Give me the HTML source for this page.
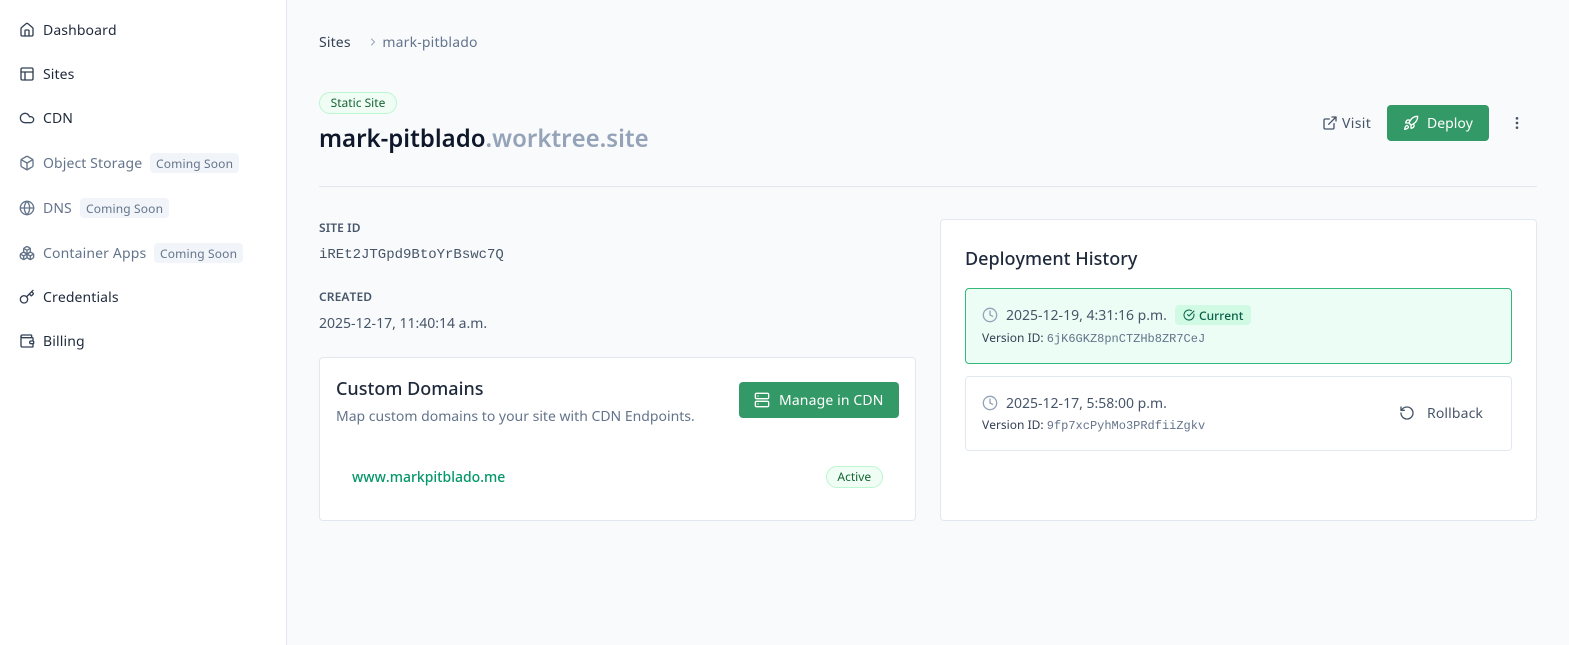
<!DOCTYPE html>
<html lang="en"><head><meta charset="utf-8"><title>mark-pitblado</title>
<style>
*{box-sizing:border-box;margin:0;padding:0}
html,body{width:1569px;height:645px;overflow:hidden;background:#f8fafc}
body{position:relative;font-family:"Noto Sans","Noto Sans CJK JP","Liberation Sans",sans-serif;font-size:14px;color:#334155;font-kerning:none}
.a{position:absolute;white-space:nowrap}
.side{position:absolute;left:0;top:0;width:287px;height:645px;background:#fff;border-right:1px solid #e2e8f0}
.nav{position:absolute;left:43px;font-size:14px;line-height:20px;color:#1e293b;white-space:nowrap;letter-spacing:.1px}
.nav.dim{color:#64748b}
.ic{position:absolute;fill:none;stroke:currentColor;stroke-width:2;stroke-linecap:round;stroke-linejoin:round}
.soon{position:absolute;height:20px;line-height:22px;background:#f1f5f9;color:#64748b;font-size:12px;border-radius:4px;padding:0 6px;white-space:nowrap;letter-spacing:.14px}
.mono{font-family:"Liberation Mono",monospace;letter-spacing:0}
.card{position:absolute;background:#fff;border:1px solid #e2e8f0;border-radius:4px}
.btn{position:absolute;background:#339966;color:#fff;border-radius:4px}
.pill{position:absolute;background:#f0fdf4;border:1px solid #bbf7d0;color:#166534;border-radius:999px;font-size:12px;text-align:center}
</style></head><body>
<div class="side"></div>

<svg class="ic" style="left:19px;top:22px;color:#334155" width="16" height="16" viewBox="0 0 24 24"><path d="M15 21v-8a1 1 0 0 0-1-1h-4a1 1 0 0 0-1 1v8"/><path d="M3 10a2 2 0 0 1 .709-1.528l7-6a2 2 0 0 1 2.582 0l7 6A2 2 0 0 1 21 10v9a2 2 0 0 1-2 2H5a2 2 0 0 1-2-2z"/></svg>
<div class="nav" style="top:21px">Dashboard</div>
<svg class="ic" style="left:19px;top:66px;color:#334155" width="16" height="16" viewBox="0 0 24 24"><rect x="3" y="3" width="18" height="18" rx="2"/><path d="M3 9h18"/><path d="M9 21V9"/></svg>
<div class="nav" style="top:65px">Sites</div>
<svg class="ic" style="left:19px;top:110px;color:#334155" width="16" height="16" viewBox="0 0 24 24"><path d="M17.5 19H9a7 7 0 1 1 6.71-9h1.79a4.5 4.5 0 1 1 0 9Z"/></svg>
<div class="nav" style="top:109px">CDN</div>
<svg class="ic" style="left:19px;top:155px;color:#64748b" width="16" height="16" viewBox="0 0 24 24"><path d="M21 8a2 2 0 0 0-1-1.73l-7-4a2 2 0 0 0-2 0l-7 4A2 2 0 0 0 3 8v8a2 2 0 0 0 1 1.73l7 4a2 2 0 0 0 2 0l7-4A2 2 0 0 0 21 16Z"/><path d="m3.3 7 8.7 5 8.7-5"/><path d="M12 22V12"/></svg>
<div class="nav dim" style="top:154px">Object Storage</div>
<div class="soon" style="left:150px;top:153px">Coming Soon</div>
<svg class="ic" style="left:19px;top:200px;color:#64748b" width="16" height="16" viewBox="0 0 24 24"><circle cx="12" cy="12" r="10"/><path d="M12 2a14.5 14.5 0 0 0 0 20 14.5 14.5 0 0 0 0-20"/><path d="M2 12h20"/></svg>
<div class="nav dim" style="top:199px">DNS</div>
<div class="soon" style="left:80px;top:198px">Coming Soon</div>
<svg class="ic" style="left:19px;top:245px;color:#64748b" width="16" height="16" viewBox="0 0 24 24"><path d="M2.97 12.92A2 2 0 0 0 2 14.63v3.24a2 2 0 0 0 .97 1.71l3 1.8a2 2 0 0 0 2.06 0L12 19v-5.5l-5-3-4.03 2.42Z"/><path d="m7 16.5-4.74-2.85"/><path d="m7 16.5 5-3"/><path d="M7 16.5v5.17"/><path d="M12 13.5V19l3.97 2.38a2 2 0 0 0 2.06 0l3-1.8a2 2 0 0 0 .97-1.71v-3.24a2 2 0 0 0-.97-1.71L17 10.5l-5 3Z"/><path d="m17 16.5-5-3"/><path d="m17 16.5 4.74-2.85"/><path d="M17 16.5v5.17"/><path d="M7.97 4.42A2 2 0 0 0 7 6.13v4.37l5 3 5-3V6.13a2 2 0 0 0-.97-1.71l-3-1.8a2 2 0 0 0-2.06 0l-3 1.8Z"/><path d="M12 8 7.26 5.15"/><path d="m12 8 4.74-2.85"/><path d="M12 13.5V8"/></svg>
<div class="nav dim" style="top:244px;letter-spacing:.14px">Container Apps</div>
<div class="soon" style="left:154px;top:243px">Coming Soon</div>
<svg class="ic" style="left:19px;top:289px;color:#334155" width="16" height="16" viewBox="0 0 24 24"><path d="m15.5 7.5 2.3 2.3a1 1 0 0 0 1.4 0l2.1-2.1a1 1 0 0 0 0-1.4L19 4"/><path d="m21 2-9.6 9.6"/><circle cx="7.5" cy="15.5" r="5.5"/></svg>
<div class="nav" style="top:288px">Credentials</div>
<svg class="ic" style="left:19px;top:333px;color:#334155" width="16" height="16" viewBox="0 0 24 24"><path d="M19 7V4a1 1 0 0 0-1-1H5a2 2 0 0 0 0 4h15a1 1 0 0 1 1 1v4h-3a2 2 0 0 0 0 4h3a1 1 0 0 0 1-1v-2a1 1 0 0 0-1-1"/><path d="M3 5v14a2 2 0 0 0 2 2h15a1 1 0 0 0 1-1v-4"/></svg>
<div class="nav" style="top:332px;letter-spacing:.14px">Billing</div>

<div class="a" style="left:319px;top:33px;line-height:20px;color:#334155;letter-spacing:.15px">Sites</div>
<svg class="ic" style="left:367px;top:36px;color:#94a3b8" width="12" height="12" viewBox="0 0 24 24"><path d="m9 18 6-6-6-6"/></svg>
<div class="a" style="left:382.4px;top:33px;line-height:20px;color:#64748b;letter-spacing:.16px">mark-pitblado</div>

<div class="pill" style="left:319px;top:92px;width:78px;height:22px;line-height:20px">Static Site</div>
<div class="a" style="left:319px;top:123px;font-size:24px;line-height:32px;font-weight:600;color:#0f172a">mark-pitblado<span style="color:#94a3b8">.worktree.site</span></div>

<svg class="ic" style="left:1322px;top:115px;color:#475569" width="16" height="16" viewBox="0 0 24 24"><path d="M15 3h6v6"/><path d="M10 14 21 3"/><path d="M18 13v6a2 2 0 0 1-2 2H5a2 2 0 0 1-2-2V8a2 2 0 0 1 2-2h6"/></svg>
<div class="a" style="left:1342px;top:114px;line-height:20px;color:#475569;letter-spacing:.35px">Visit</div>
<div class="btn" style="left:1387px;top:105px;width:102px;height:36px"></div>
<svg class="ic" style="left:1403px;top:115px;color:#fff" width="16" height="16" viewBox="0 0 24 24"><path d="M4.5 16.5c-1.5 1.26-2 5-2 5s3.74-.5 5-2c.71-.84.7-2.13-.09-2.91a2.18 2.18 0 0 0-2.91-.09z"/><path d="m12 15-3-3a22 22 0 0 1 2-3.95A12.88 12.88 0 0 1 22 2c0 2.72-.78 7.5-6 11a22.35 22.35 0 0 1-4 2z"/><path d="M9 12H4s.55-3.03 2-4c1.62-1.08 5 0 5 0"/><path d="M12 15v5s3.03-.55 4-2c1.08-1.62 0-5 0-5"/></svg>
<div class="a" style="left:1427px;top:114px;line-height:20px;color:#fff">Deploy</div>
<svg class="ic" style="left:1509px;top:115px;color:#475569" width="16" height="16" viewBox="0 0 24 24"><circle cx="12" cy="12" r="1"/><circle cx="12" cy="5" r="1"/><circle cx="12" cy="19" r="1"/></svg>

<div class="a" style="left:319px;top:186px;width:1218px;height:1px;background:#e2e8f0"></div>

<div class="a" style="left:319px;top:220px;font-size:12px;line-height:16px;font-weight:600;color:#475569;letter-spacing:.1px">SITE ID</div>
<div class="a mono" style="left:319px;top:245px;line-height:20px;color:#475569">iREt2JTGpd9BtoYrBswc7Q</div>
<div class="a" style="left:319px;top:289px;font-size:12px;line-height:16px;font-weight:600;color:#475569;letter-spacing:.1px">CREATED</div>
<div class="a" style="left:319px;top:314px;line-height:20px;color:#475569">2025-12-17, 11:40:14 a.m.</div>

<div class="card" style="left:319px;top:357px;width:597px;height:164px"></div>
<div class="a" style="left:336px;top:376px;font-size:18px;line-height:26px;font-weight:500;color:#1e293b">Custom Domains</div>
<div class="a" style="left:336px;top:407px;line-height:20px;color:#64748b">Map custom domains to your site with CDN Endpoints.</div>
<div class="btn" style="left:739px;top:382px;width:160px;height:36px"></div>
<svg class="ic" style="left:754px;top:392px;color:#fff" width="16" height="16" viewBox="0 0 24 24"><rect x="2" y="2" width="20" height="8" rx="2"/><rect x="2" y="14" width="20" height="8" rx="2"/><path d="M6 6h.01"/><path d="M6 18h.01"/></svg>
<div class="a" style="left:779px;top:391px;line-height:20px;color:#fff;letter-spacing:.13px">Manage in CDN</div>
<div class="a" style="left:352px;top:468px;line-height:20px;font-weight:500;color:#059669">www.markpitblado.me</div>
<div class="pill" style="left:825.6px;top:466px;width:57.4px;height:22px;line-height:20px">Active</div>

<div class="card" style="left:940px;top:219px;width:597px;height:302px"></div>
<div class="a" style="left:965px;top:246px;font-size:18px;line-height:26px;font-weight:500;color:#1e293b">Deployment History</div>

<div class="a" style="left:965px;top:288px;width:547px;height:76px;background:#ecfdf5;border:1px solid #34b97d;border-radius:4px"></div>
<svg class="ic" style="left:982px;top:307px;color:#94a3b8" width="16" height="16" viewBox="0 0 24 24"><circle cx="12" cy="12" r="10"/><path d="M12 6v6l4 2"/></svg>
<div class="a" style="left:1006px;top:306px;line-height:20px;color:#475569">2025-12-19, 4:31:16 p.m.</div>
<div class="a" style="left:1175px;top:305px;width:76px;height:20px;background:#d1fae5;border-radius:4px"></div>
<svg class="ic" style="left:1183px;top:309px;color:#065f46" width="12" height="12" viewBox="0 0 24 24"><path d="M21.801 10A10 10 0 1 1 17 3.335"/><path d="m9 11 3 3L22 4"/></svg>
<div class="a" style="left:1199px;top:306px;font-size:12px;line-height:20px;font-weight:500;color:#065f46">Current</div>
<div class="a" style="left:982px;top:330px;font-size:12px;line-height:16px;color:#334155">Version ID: <span class="mono" style="color:#64748b">6jK6GKZ8pnCTZHb8ZR7CeJ</span></div>

<div class="a" style="left:965px;top:376px;width:547px;height:75px;background:#fff;border:1px solid #e2e8f0;border-radius:4px"></div>
<svg class="ic" style="left:982px;top:395px;color:#94a3b8" width="16" height="16" viewBox="0 0 24 24"><circle cx="12" cy="12" r="10"/><path d="M12 6v6l4 2"/></svg>
<div class="a" style="left:1006px;top:394px;line-height:20px;color:#475569">2025-12-17, 5:58:00 p.m.</div>
<div class="a" style="left:982px;top:417px;font-size:12px;line-height:16px;color:#334155">Version ID: <span class="mono" style="color:#64748b">9fp7xcPyhMo3PRdfiiZgkv</span></div>
<svg class="ic" style="left:1399px;top:405px;color:#475569" width="16" height="16" viewBox="0 0 24 24"><path d="M3 12a9 9 0 1 0 9-9 9.75 9.75 0 0 0-6.74 2.74L3 8"/><path d="M3 3v5h5"/></svg>
<div class="a" style="left:1427px;top:404px;line-height:20px;color:#475569;letter-spacing:.12px">Rollback</div>
</body></html>
